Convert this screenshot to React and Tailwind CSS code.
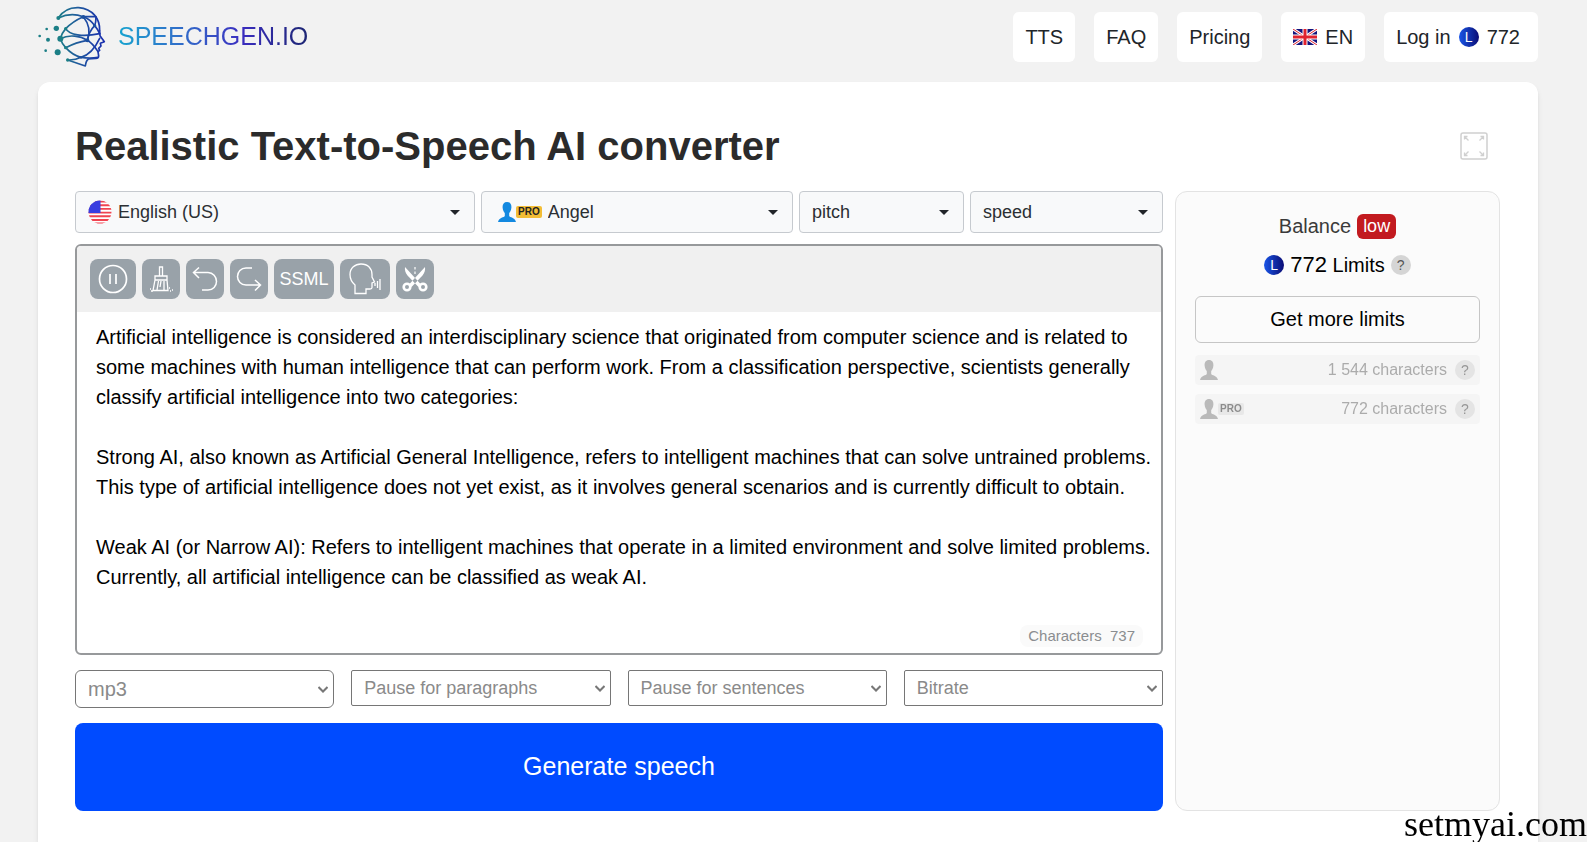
import {useState} from 'react';

const TEXT = `Artificial intelligence is considered an interdisciplinary science that originated from computer science and is related to some machines with human intelligence that can perform work. From a classification perspective, scientists generally classify artificial intelligence into two categories:

Strong AI, also known as Artificial General Intelligence, refers to intelligent machines that can solve untrained problems. This type of artificial intelligence does not yet exist, as it involves general scenarios and is currently difficult to obtain.

Weak AI (or Narrow AI): Refers to intelligent machines that operate in a limited environment and solve limited problems. Currently, all artificial intelligence can be classified as weak AI.`;

function Logo() {
    return (
        <a href="#" className="flex items-center gap-3">
            <svg viewBox="54 12 204 192" className="h-16 w-[68px]" fill="none" stroke="url(#head)" strokeWidth="5" strokeLinecap="round" strokeLinejoin="round">
                <defs>
                    <linearGradient id="head" gradientUnits="userSpaceOnUse" x1="110" y1="0" x2="250" y2="0">
                        <stop offset="0" stopColor="#1b7f86"/>
                        <stop offset="0.45" stopColor="#1f5a9c"/>
                        <stop offset="1" stopColor="#1a2fae"/>
                    </linearGradient>
                </defs>
                <path d="M115 54C132 27 154 22 176 23C218 27 240 56 239 92L240 107L253 125L241 130L243 138L236 145L239 151L234 155L236 168Q236 176 226 175L205 177Q198 182 196 198L143 180"/>
                <path d="M115 54Q152 36 190 50Q212 58 224 77Q232 86 239 101"/>
                <path d="M190 50H228Q228 66 224 77Q207 94 202 121"/>
                <path d="M137 86Q158 64 190 50M137 86C148 105 188 112 239 101"/>
                <path d="M121 116Q125 100 137 86M121 116C148 102 182 108 202 121Q218 130 234 155"/>
                <path d="M121 116Q126 131 137 143M137 143Q168 127 202 121"/>
                <path d="M137 143Q158 166 183 172Q210 176 234 172M143 180Q166 181 183 172Q217 162 239 115"/>
                <path d="M190 50Q217 84 202 121"/>
                <g stroke="none" fill="#1c4f9f">
                    <circle cx="190" cy="51" r="6"/>
                    <circle cx="224" cy="77" r="5"/>
                    <circle cx="202" cy="121" r="6"/>
                    <circle cx="183" cy="172" r="4"/>
                </g>
                <g stroke="none" fill="#1c7f86">
                    <circle cx="115" cy="54" r="6"/>
                    <circle cx="109" cy="85" r="8"/>
                    <circle cx="137" cy="86" r="5"/>
                    <circle cx="121" cy="116" r="9"/>
                    <circle cx="113" cy="157" r="9"/>
                    <circle cx="137" cy="143" r="5"/>
                    <circle cx="143" cy="180" r="5"/>
                    <circle cx="84" cy="119" r="6"/>
                    <circle cx="80" cy="87" r="4"/>
                    <circle cx="59" cy="108" r="4"/>
                    <circle cx="77" cy="152" r="4"/>
                </g>
            </svg>
            <span className="bg-linear-to-r from-[#14a3cf] via-[#3a2cc0] via-65% to-[#1d2673] bg-clip-text pt-0.5 text-[25px] text-transparent">
                SPEECHGEN.IO
            </span>
        </a>
    );
}

function Coin() {
    return (
        <span className="flex size-5 items-center justify-center rounded-full bg-linear-to-r from-[#1a55e8] to-[#0b0a75] text-sm text-white">
            L
        </span>
    );
}

function UkFlag() {
    return (
        <svg viewBox="0 0 24 16" className="h-4 w-6">
            <path fill="#14147d" d="M0 0h24v16H0z"/>
            <path stroke="#fff" strokeWidth="3" d="M0 0l24 16M24 0L0 16"/>
            <path stroke="#e0222f" strokeWidth="1" d="M0 0l24 16M24 0L0 16"/>
            <path stroke="#fff" strokeWidth="5" d="M12 0v16M0 8h24"/>
            <path stroke="#e0222f" strokeWidth="3" d="M12 0v16M0 8h24"/>
        </svg>
    );
}

function UsFlag() {
    return (
        <svg viewBox="0 0 24 24" className="size-6 shrink-0">
            <clipPath id="us"><circle cx="12" cy="12" r="11.5"/></clipPath>
            <g clipPath="url(#us)">
                <path fill="#fff" d="M0 0h24v24H0z"/>
                <path stroke="#f04350" strokeWidth="1.9" d="M0 1.5h24M0 5.2h24M0 8.9h24M0 12.6h24M0 16.3h24M0 20h24M0 23.4h24"/>
                <path fill="#3a3de0" d="M0 0h12.5v13H0z"/>
            </g>
        </svg>
    );
}

function Person({className}) {
    return (
        <svg viewBox="0 0 18 20" className={className} fill="currentColor">
            <path d="M9 0C5.8 0 4.4 2.4 4.6 5.5C4.8 8.6 6 10 6.800 11V14C6.300 15.500 1 15.300 0 20H18C17 15.300 11.700 15.500 11.200 14V11C12 10 13.200 8.600 13.400 5.500C13.600 2.400 12.200 0 9 0Z"/>
        </svg>
    );
}

function NavLink({className = 'px-3', children}) {
    return (
        <a href="#" className={`flex h-[50px] items-center gap-2 rounded-md bg-white text-xl text-[#212529] ${className}`}>
            {children}
        </a>
    );
}

function VoiceSelect({label, value, icon}) {
    return (
        <label className="flex h-[42px] items-center gap-1.5 rounded border border-[#c6cacf] bg-[#f8f9fa] px-3">
            {icon}
            <select aria-label={label} className="min-w-0 flex-1 appearance-none text-lg text-[#2b2f33] outline-none">
                <option>{value}</option>
            </select>
            <svg viewBox="0 0 10 5" className="mr-0.5 h-[5px] w-2.5 shrink-0" fill="#212529">
                <path d="M0 0h10L5 5z"/>
            </svg>
        </label>
    );
}

function OptionSelect({label, className}) {
    return (
        <label className={`flex min-w-0 flex-1 items-center border border-[#767676] pr-[5px] pl-3 text-[#8a8a8a] ${className}`}>
            <select aria-label={label} className="min-w-0 flex-1 appearance-none outline-none">
                <option>{label}</option>
            </select>
            <svg viewBox="0 0 10 7" className="h-[7px] w-2.5 shrink-0" fill="none" stroke="#777" strokeWidth="2">
                <path d="M0.500 1L5 5.500L9.500 1"/>
            </svg>
        </label>
    );
}

function Tool({label, className, children}) {
    return (
        <button aria-label={label} className={`flex h-10 items-center justify-center rounded-lg bg-[#99a2a9] text-lg text-white ${className}`}>
            {children}
        </button>
    );
}

function Toolbar() {
    return (
        <div className="flex gap-1.5 bg-[#f0f0f0] p-[13px]">
            <Tool label="Pause" className="w-[46px]">
                <svg viewBox="0 0 30 30" className="size-[30px]" fill="none" stroke="#fff" strokeWidth="1.7">
                    <circle cx="15" cy="15" r="13.5"/>
                    <path d="M12 10v10M18 10v10"/>
                </svg>
            </Tool>
            <Tool label="Clear" className="w-[38px]">
                <svg viewBox="0 0 26 28" className="h-7 w-[26px]" fill="none" stroke="#fff" strokeWidth="1.3">
                    <path d="M11.5 11V2h3v9M7 11h12v4H7zM7 15L5 25.5h15L19 15M10.5 16L9 25M13 16l-1 6M16 16v9M2 24h1M3 26h2M21 23h1M22 26h1M24 25h1"/>
                </svg>
            </Tool>
            <Tool label="Undo" className="w-[38px]">
                <svg viewBox="0 0 26 26" className="size-[26px]" fill="none" stroke="#fff" strokeWidth="1.5">
                    <path d="M7 1.500L1.500 6.500L7 12M1.500 6.500H16C21 6.500 24.500 11 24.500 15.500S21 24 16 24H10"/>
                </svg>
            </Tool>
            <Tool label="Redo" className="w-[38px]">
                <svg viewBox="0 0 26 26" className="size-[26px]" fill="none" stroke="#fff" strokeWidth="1.5">
                    <path d="M19 14L24.500 19L19 24.500M24.500 19H10C5 19 1.500 15 1.500 10.500S5 2 10 2H16"/>
                </svg>
            </Tool>
            <Tool label="SSML" className="w-[60px]">SSML</Tool>
            <Tool label="Dialogue" className="w-[50px]">
                <svg viewBox="0 0 32 32" className="size-8" fill="none" stroke="#fff" strokeWidth="1.3">
                    <path d="M6 30.500V22C2.500 19 1 16 1 11.500C1 5 6 1 12 1C19 1 23 5.500 23 11.500V14L25.500 19L23 20V24.500Q23 26 21 26H17V30.500Z"/>
                    <path d="M26 20v3M28.500 18v7M31 16v11"/>
                </svg>
            </Tool>
            <Tool label="Cut" className="w-[38px]">
                <svg viewBox="0 0 26 26" className="size-[26px]" fill="none" stroke="#fff">
                    <circle cx="5" cy="21" r="3.3" strokeWidth="2.6"/>
                    <circle cx="21" cy="21" r="3.3" strokeWidth="2.6"/>
                    <path fill="#fff" stroke="none" d="M3 1C2.500 4 3.500 7 5.500 9.500L16.500 21L19 18.500ZM23 1C23.500 4 22.500 7 20.500 9.500L9.500 21L7 18.500Z"/>
                    <path strokeWidth="1.2" strokeDasharray="2.5 2" d="M13 1v8"/>
                </svg>
            </Tool>
        </div>
    );
}

function Help() {
    return (
        <button aria-label="Help" className="flex size-5 items-center justify-center rounded-full bg-[#d5d5d5] text-sm text-[#555]">
            ?
        </button>
    );
}

function Quota({pro, count}) {
    return (
        <div className="flex h-[30px] items-center rounded bg-[#f2f2f2] px-[5px] text-base opacity-60">
            <Person className="h-5 w-[18px] text-[#909090]"/>
            {pro && <span className="rounded-xs bg-[#dcdcdc] px-0.5 text-[10px] leading-3 font-black text-[#444]">PRO</span>}
            <span className="mr-2 ml-auto text-[#777]">{count} characters</span>
            <Help/>
        </div>
    );
}

const OPTIONS = ['Pause for paragraphs', 'Pause for sentences', 'Bitrate'];

export default function App() {
    const [text, setText] = useState(TEXT);

    return (
        <div className="flex min-h-screen flex-col bg-[#f2f2f2] pr-[49px] pl-[38px] font-['Liberation_Sans',Arial,sans-serif]">
            <header className="flex items-start justify-between pb-2">
                <div className="pt-1"><Logo/></div>
                <nav className="flex gap-[19px] pt-3">
                    <NavLink>TTS</NavLink>
                    <NavLink>FAQ</NavLink>
                    <NavLink>Pricing</NavLink>
                    <NavLink><UkFlag/>EN</NavLink>
                    <NavLink className="pr-[18px] pl-3">Log in <Coin/>772</NavLink>
                </nav>
            </header>

            <main className="mt-1.5 flex-1 rounded-t-xl bg-white pt-10 pr-[38px] pb-[30px] pl-[37px] shadow-md">
                <div className="flex h-12 items-center justify-between">
                    <h1 className="text-[40px] font-bold text-[#2b2b2b]">Realistic Text-to-Speech AI converter</h1>
                    <button aria-label="Full screen" className="mr-3">
                        <svg viewBox="0 0 28 28" className="size-7" fill="none" stroke="#d0d0d0">
                            <rect x="1" y="1" width="26" height="26" rx="2" strokeWidth="1.5"/>
                            <path strokeWidth="1.3" d="M4.500 7.500v-3h3M4.500 4.500l4 4M20.500 4.500h3v3M23.500 4.500l-4 4M4.500 20.500v3h3M4.500 23.500l4-4M20.500 23.500h3v-3M23.500 23.500l-4-4"/>
                        </svg>
                    </button>
                </div>

                <div className="mt-[21px] flex gap-3">
                    <div className="min-w-0 flex-1">
                        <div className="grid grid-cols-[400fr_312fr_165fr_193fr] gap-1.5">
                            <VoiceSelect label="Language" value="English (US)" icon={<UsFlag/>}/>
                            <VoiceSelect
                                label="Voice"
                                value="Angel"
                                icon={
                                    <span className="flex items-center pl-1">
                                        <Person className="h-5 w-[18px] text-[#1389e0]"/>
                                        <span className="rounded-xs bg-[#f3bd35] px-0.5 text-[10px] leading-3 font-black text-[#222]">PRO</span>
                                    </span>
                                }
                            />
                            <VoiceSelect label="Pitch" value="pitch"/>
                            <VoiceSelect label="Speed" value="speed"/>
                        </div>

                        <div className="mt-[11px] overflow-hidden rounded-md border-2 border-[#97999b]">
                            <Toolbar/>
                            <textarea
                                aria-label="Text"
                                value={text}
                                onChange={e => setText(e.target.value)}
                                className="block h-[313px] w-full resize-none pt-2.5 pr-1.5 pl-[19px] text-xl leading-[30px] text-black outline-none"
                            />
                            <div className="flex justify-end pr-[18px] pb-1.5">
                                <span className="rounded-lg bg-[#fafafa] px-2 text-[15px] leading-[22px] text-[#8a8d90]">
                                    Characters&nbsp; 737
                                </span>
                            </div>
                        </div>

                        <div className="mt-[15px] flex items-start gap-[17px]">
                            <OptionSelect label="mp3" className="h-[38px] rounded-md text-xl"/>
                            {OPTIONS.map(option => (
                                <OptionSelect key={option} label={option} className="h-9 rounded-xs text-lg"/>
                            ))}
                        </div>

                        <button className="mt-[15px] h-[88px] w-full rounded-lg bg-[#004bff] text-[25px] text-white">
                            Generate speech
                        </button>
                    </div>

                    <aside className="w-[325px] shrink-0 rounded-xl border border-[#e3e3e3] bg-[#fbfbfb] px-[19px] pt-5">
                        <div className="flex items-center justify-center gap-1.5 text-xl text-[#3a3a3a]">
                            Balance
                            <span className="rounded-md bg-[#c21a1f] px-1.5 text-lg leading-[25px] text-white">low</span>
                        </div>
                        <div className="mt-2.5 flex items-center justify-center gap-1.5 text-xl text-black">
                            <Coin/>
                            <span><span className="text-[22px]">772</span> Limits</span>
                            <Help/>
                        </div>
                        <button className="mt-[15px] h-[47px] w-full rounded-md border border-[#c6c6c6] text-xl text-black">
                            Get more limits
                        </button>
                        <div className="mt-3 flex flex-col gap-[9px]">
                            <Quota count="1 544"/>
                            <Quota pro count="772"/>
                        </div>
                    </aside>
                </div>
            </main>

            <div className="fixed right-0 bottom-0 font-['Liberation_Serif',serif] text-4xl leading-9 text-black">
                setmyai.com
            </div>
        </div>
    );
}
